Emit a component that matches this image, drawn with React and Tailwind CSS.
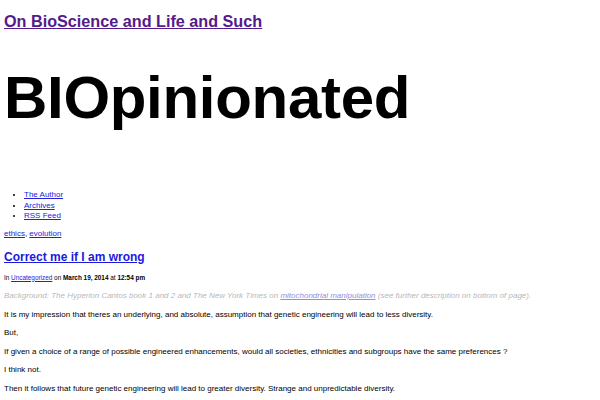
export default function App() {
  return (
    <div className="bg-white w-[600px] h-[400px] overflow-hidden px-[4px] text-black" style={{ fontFamily: '"Liberation Sans", Arial, sans-serif' }}>
      <div className="pt-[11px] text-[16.2px] leading-[20px] font-bold">
        <a href="#" className="text-[#551a8b] underline">On BioScience and Life and Such</a>
      </div>
      <h1 className="mt-[32px] text-[60px] leading-[70px] font-bold tracking-[-0.3px]">BIOpinionated</h1>
      <ul className="mt-[57px] list-disc pl-[20px] text-[8px] leading-[10.5px]">
        <li><a href="#" className="text-[#2222dd] underline">The Author</a></li>
        <li><a href="#" className="text-[#2222dd] underline">Archives</a></li>
        <li><a href="#" className="text-[#2222dd] underline">RSS Feed</a></li>
      </ul>
      <div className="mt-[7px] text-[8px] leading-[10px]">
        <a href="#" className="text-[#2222dd] underline">ethics</a>, <a href="#" className="text-[#2222dd] underline">evolution</a>
      </div>
      <h2 className="mt-[10px] text-[12px] leading-[16px] font-bold">
        <a href="#" className="text-[#1a1add] underline">Correct me if I am wrong</a>
      </h2>
      <div className="mt-[9px] text-[6.4px] leading-[8px]">
        In <a href="#" className="text-[#2222dd] underline">Uncategorized</a> on <b>March 19, 2014</b> at <b>12:54 pm</b>
      </div>
      <p className="mt-[9px] text-[8px] leading-[10px] italic text-[#b8b8b8]">
        Background: The Hyperion Cantos book 1 and 2  and The New York Times on <a href="#" className="text-[#9090e0] underline">mitochondrial manipulation</a> (see further description on bottom of page).
      </p>
      <div className="text-[8px] leading-[10px]">
        <p className="mt-[9px]">It is my impression that theres an underlying, and absolute, assumption that genetic engineering will lead to less diversity.</p>
        <p className="mt-[8.6px]">But,</p>
        <p className="mt-[8.6px]">If given a choice of a range of possible engineered enhancements, would all societies, ethnicities and subgroups have the same preferences ?</p>
        <p className="mt-[8.6px]">I think not.</p>
        <p className="mt-[8.6px]">Then it follows that future genetic engineering will lead to greater diversity. Strange and unpredictable diversity.</p>
      </div>
    </div>
  );
}
